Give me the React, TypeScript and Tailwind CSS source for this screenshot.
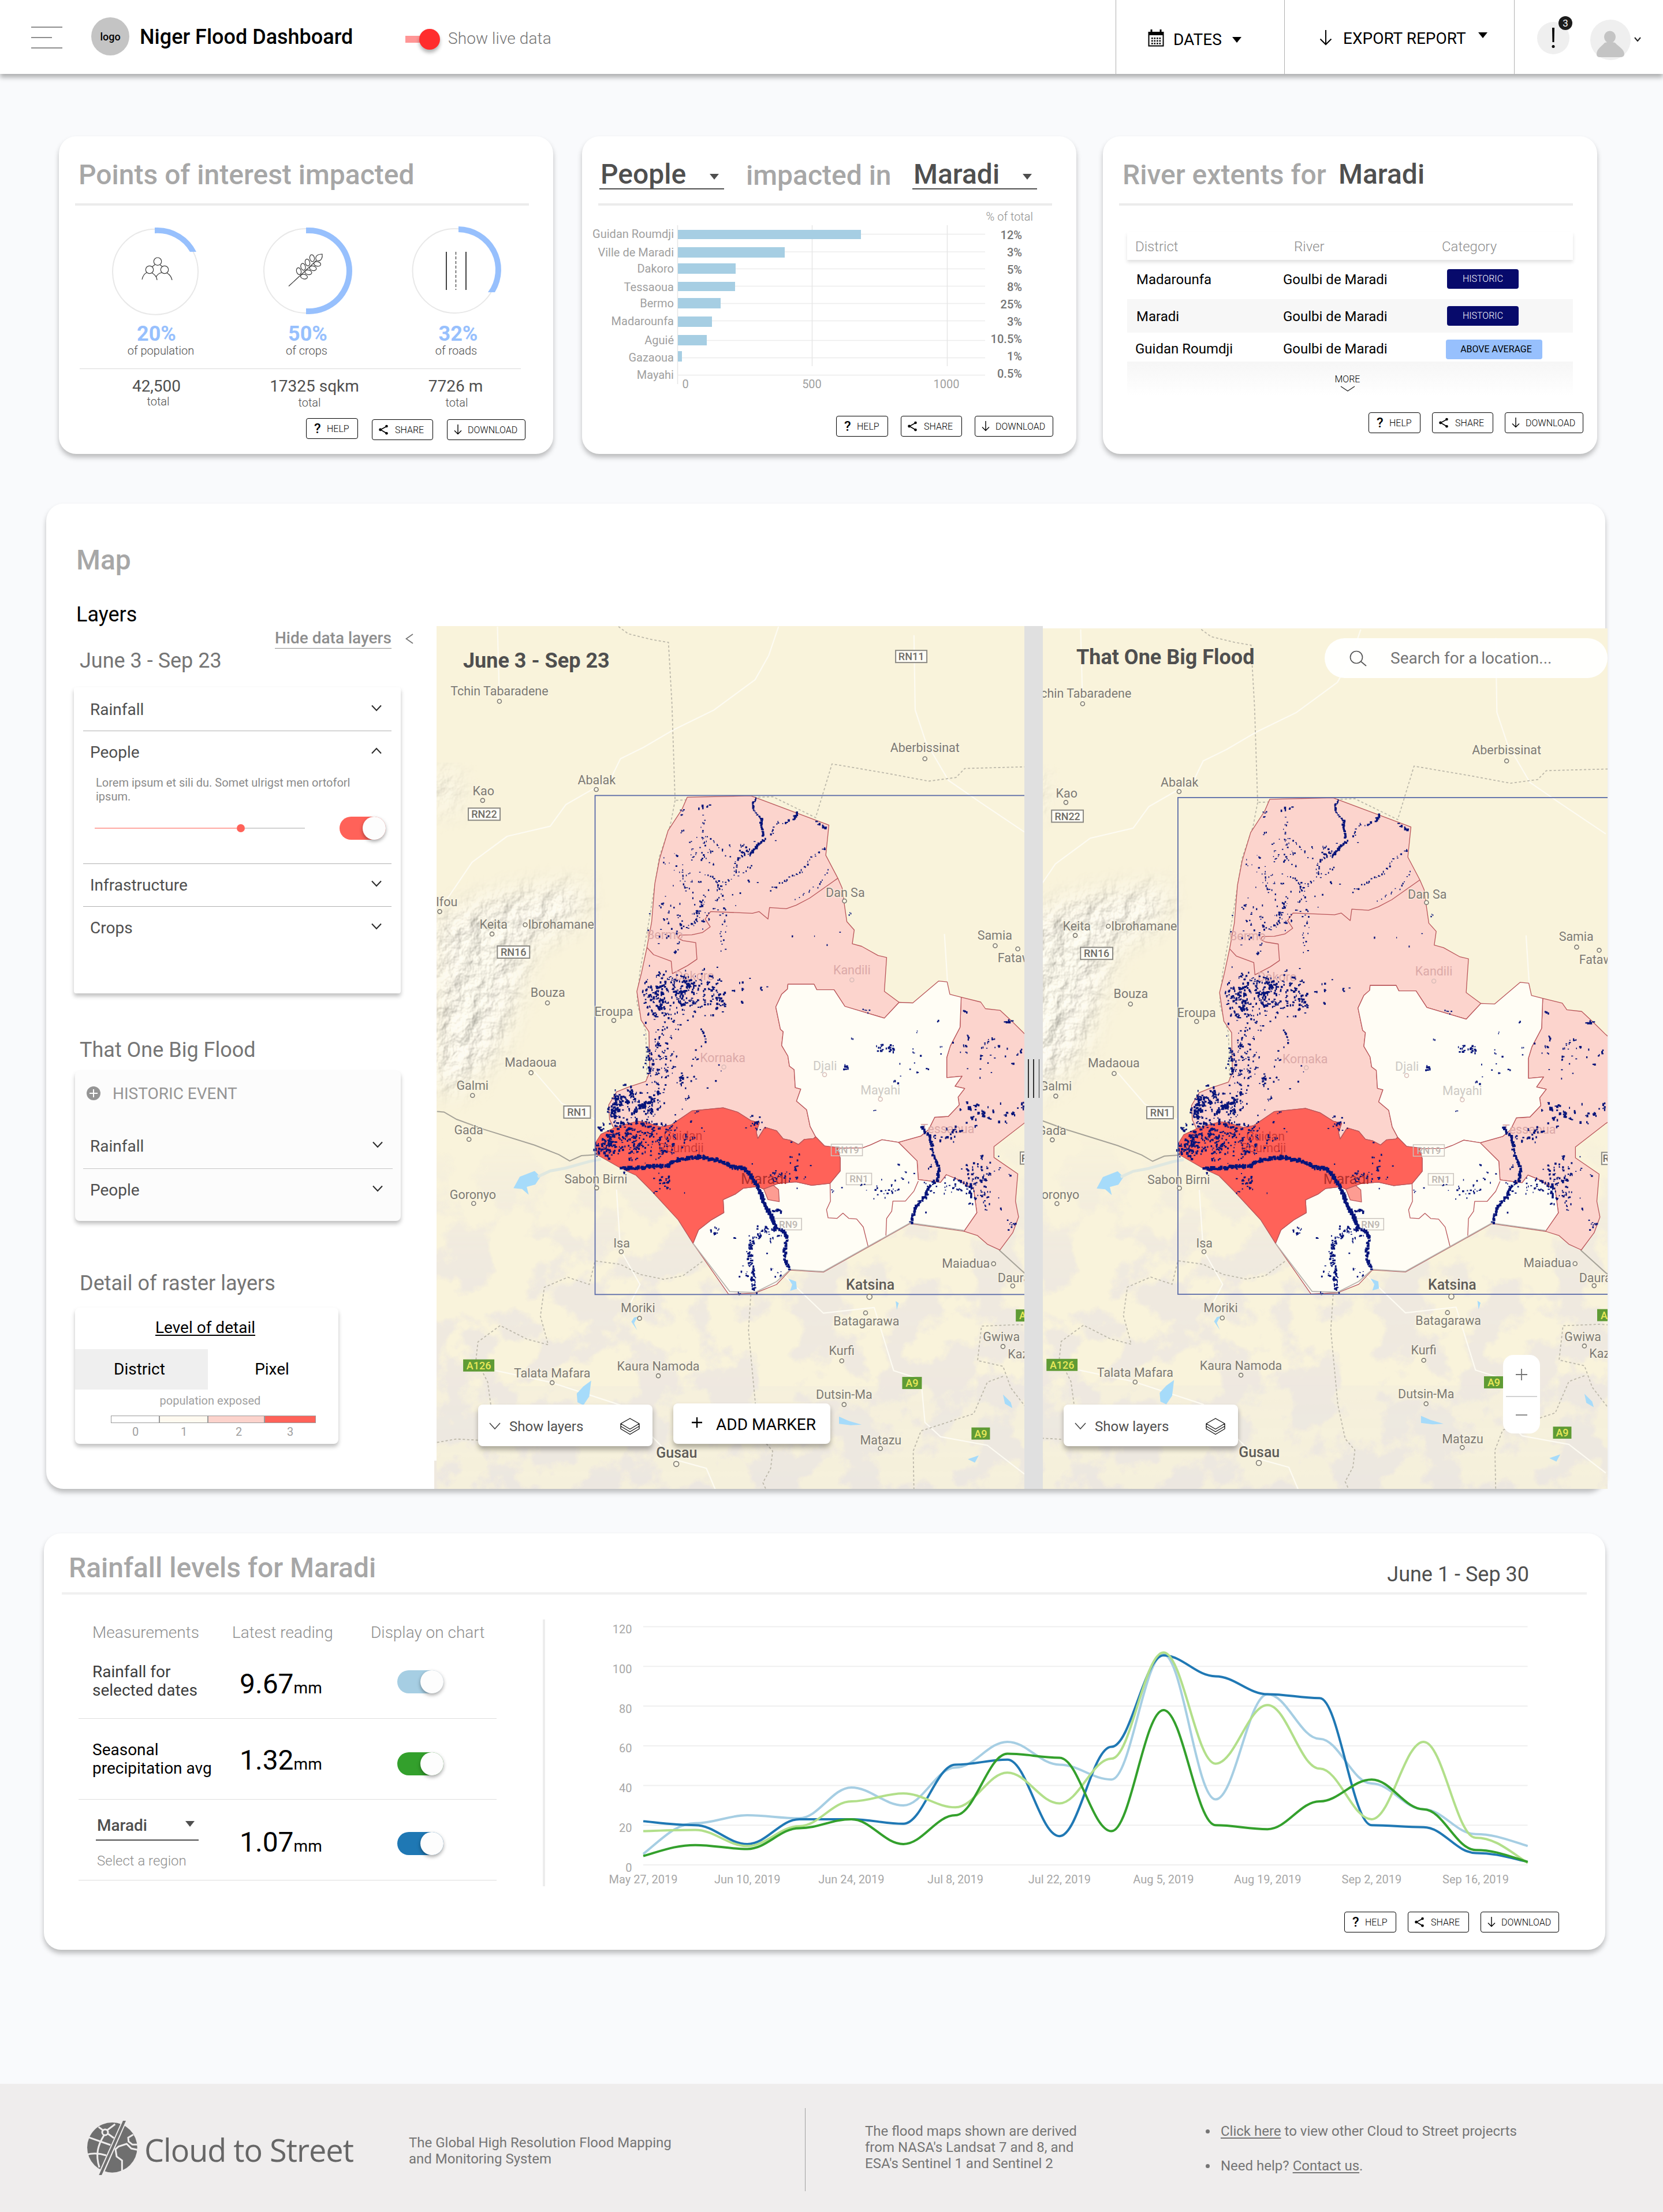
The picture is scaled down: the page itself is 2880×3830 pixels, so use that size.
import React from "react";

type Pt = [number, number];

/* ------------------------------------------------------------------ */
/* Small shared pieces                                                 */
/* ------------------------------------------------------------------ */

function Caret({ className = "" }: { className?: string }) {
  return (
    <svg viewBox="0 0 16 10" className={`h-[10px] w-4 shrink-0 ${className}`}>
      <path d="M0 0h16L8 10z" fill="currentColor" />
    </svg>
  );
}

function Chevron({ up = false, className = "" }: { up?: boolean; className?: string }) {
  return (
    <svg viewBox="0 0 18 12" className={`h-3 w-[18px] shrink-0 ${className}`} fill="none" stroke="#2b2b2b" strokeWidth="2">
      <path d={up ? "M1 10.5 9 2l8 8.5" : "M1 1.5 9 10l8-8.5"} />
    </svg>
  );
}

function Toggle({ color, className = "" }: { color: string; className?: string }) {
  return (
    <div className={`flex h-10 w-20 shrink-0 justify-end rounded-full ${color} ${className}`}>
      <div className="size-10 rounded-full bg-[#fdfdfd] shadow-[0_3px_6px_rgba(0,0,0,0.35)]" />
    </div>
  );
}

function Actions({ className = "", helpClass = "" }: { className?: string; helpClass?: string }) {
  const base = "flex h-9 shrink-0 items-center rounded-[4px] border-[1.5px] border-black bg-white text-[16px] font-light leading-5 text-black";
  return (
    <div className={`flex ${className}`}>
      <div className={`${base} w-[90px] ${helpClass}`}>
        <span className="ml-[13px] w-[22px] text-[24px] font-medium leading-6">?</span>
        <span className="pt-px">HELP</span>
      </div>
      <div className={`${base} w-[106px]`}>
        <svg viewBox="0 0 16 18" className="ml-[11px] mr-[12px] h-[18px] w-4">
          <path d="M14 3 3 9l11 6.500" fill="none" stroke="#000" strokeWidth="1.6" />
          <circle cx="13.500" cy="3" r="2.300" />
          <circle cx="2.600" cy="9" r="2.400" />
          <circle cx="13.500" cy="15.200" r="2.300" />
        </svg>
        <span className="pt-px">SHARE</span>
      </div>
      <div className={`${base} w-[136px]`}>
        <svg viewBox="0 0 14 18" className="ml-[11px] mr-[10px] h-[18px] w-[14px]" fill="none" stroke="#000" strokeWidth="1.4">
          <path d="M7 0v16.500M1 10.500l6 6 6-6" />
        </svg>
        <span className="pt-px">DOWNLOAD</span>
      </div>
    </div>
  );
}

/* ------------------------------------------------------------------ */
/* Header                                                              */
/* ------------------------------------------------------------------ */

function Header() {
  return (
    <header className="relative z-10 flex h-32 items-start bg-white shadow-[0_6px_8px_rgba(0,0,0,0.3)]">
      <div className="ml-[54px] mt-[46px] flex h-[38px] w-[54px] flex-col justify-between">
        <div className="h-[2px] w-full bg-[#8e8e8e]" />
        <div className="h-[2px] w-9 bg-[#8e8e8e]" />
        <div className="h-[2px] w-full bg-[#8e8e8e]" />
      </div>
      <div className="ml-[50px] mt-[30px] flex size-[66px] items-center justify-center rounded-full bg-[#c4c4c4] text-[18px] font-medium">logo</div>
      <div className="ml-[18px] mt-[43px] w-[460px] whitespace-nowrap text-[36px] font-medium leading-[42px] text-black">Niger Flood Dashboard</div>
      <div className="mt-[50px] flex h-9 w-[60px] items-center">
        <div className="h-3 w-9 shrink-0 bg-[#ff9696]" />
        <div className="-ml-3 size-9 shrink-0 rounded-full bg-[#ff2d2d] shadow-[0_5px_6px_rgba(0,0,0,0.3)]" />
      </div>
      <div className="ml-[14px] mt-[51px] w-[1156px] text-[28px] font-light leading-8 tracking-[0.1px] text-[#757575]">Show live data</div>
      <div className="flex h-32 w-[292px] border-l border-[#b0b0b0]">
        <svg viewBox="0 0 28 30" className="ml-[55px] mt-[51px] h-[30px] w-7">
          <path d="M6 0v7M22 0v7" stroke="#000" strokeWidth="3" />
          <path d="M1.500 5h25v23.500h-25z" fill="none" stroke="#000" strokeWidth="2" />
          <path d="M1 4h26v6H1z" />
          {[14, 18.500, 23].map((y) => [6, 10.500, 15, 19.500].map((x) => <rect key={`${x}-${y}`} x={x} y={y} width="2.600" height="2.600" />))}
        </svg>
        <div className="ml-[16px] mt-[53px] w-[102px] text-[28px] leading-8">DATES</div>
        <Caret className="mt-[64px]" />
      </div>
      <div className="flex h-32 w-[398px] border-l border-[#b0b0b0]">
        <svg viewBox="0 0 22 27" className="ml-[60px] mt-[52px] h-[27px] w-[22px]" fill="none" stroke="#000" strokeWidth="2">
          <path d="M11 0v25M1.500 15.500 11 25l9.500-9.500" />
        </svg>
        <div className="ml-[19px] mt-[51px] w-[234px] whitespace-nowrap text-[28px] leading-8">EXPORT REPORT</div>
        <Caret className="mt-[56px]" />
      </div>
      <div className="flex h-32 border-l border-[#b0b0b0]">
        <div className="relative ml-[39px] mt-[38px] flex size-14 items-center justify-center rounded-full bg-[#efefef]">
          <svg viewBox="0 0 8 36" className="h-9 w-2">
            <path d="M2 0h4l-.5 25h-3z" />
            <circle cx="4" cy="32.500" r="2.500" />
          </svg>
          <div className="absolute -right-[5px] -top-[10px] flex size-6 items-center justify-center rounded-full bg-[#1c1c1c] text-[17px] leading-6 text-white">3</div>
        </div>
        <svg viewBox="0 0 70 70" className="ml-9 mt-[34px] size-[70px]">
          <circle cx="35" cy="35" r="35" fill="#efefef" />
          <ellipse cx="34" cy="30" rx="10" ry="10.500" fill="#c4c4c4" />
          <path d="M11 60c0-9 8-13 14-20l9-2 9 2c6 7 16 11 16 20 0 3-3 5-7 5H17c-4 0-6-2-6-5z" fill="#c4c4c4" />
        </svg>
        <svg viewBox="0 0 12 8" className="ml-[6px] mt-[64px] h-2 w-3" fill="none" stroke="#222" strokeWidth="2">
          <path d="m1 1 5 6 5-6" />
        </svg>
      </div>
    </header>
  );
}

/* ------------------------------------------------------------------ */
/* Card 1: points of interest                                          */
/* ------------------------------------------------------------------ */

function PointsCard() {
  return (
    <section className="h-[550px] w-[856px] rounded-[30px] bg-white pt-[39px] shadow-[0_6px_8px_rgba(0,0,0,0.25)]">
      <h2 className="ml-[34px] text-[48px] font-medium leading-[56px] text-[#a7a7a7]">Points of interest impacted</h2>
      <div className="ml-7 mt-[21px] h-1 w-[786px] bg-[#ececec]" />
      <div className="ml-[38px] mt-[29px] grid grid-cols-[262px_258px_260px] text-center text-[#4f4f4f]">
        <div>
          <svg viewBox="140 385 262 170" className="h-[170px] w-[262px]" fill="none">
            <circle cx="269" cy="470.700" r="74" stroke="#e8e8e8" strokeWidth="2" />
            <path d="M268 394a75 75 0 0 1 5 0A75 75 0 0 1 340 436H329A65 65 0 0 0 268 404Z" fill="#97c0fd" />
            <g stroke="#3a3a3a" strokeWidth="1.200">
              <circle cx="273" cy="452.700" r="6.700" />
              <circle cx="259" cy="467" r="6.700" />
              <circle cx="285" cy="467" r="6.700" />
              <path d="M246 484c1-5 4-10 8-12M263 472.500c4 2 9 7 9 12.500M270 480c2-4 5-7 10-8M289 472.500c5 3 8 7 9 12.500M263.500 462l5-4M281 461.500l-4-3" />
            </g>
          </svg>
          <div className="mt-[4px] text-[36px] font-bold leading-[38px] text-[#97c0fd]">20%</div>
          <div className="-mt-px pl-[15px] text-[20px] font-light leading-[22px]">of population</div>
        </div>
        <div>
          <svg viewBox="402 385 258 170" className="h-[170px] w-[258px]" fill="none">
            <circle cx="530" cy="469" r="73" stroke="#e8e8e8" strokeWidth="2" />
            <path d="M530 394h5a75 75 0 0 1 0 150h-5v-10h5a65 65 0 0 0 0-130h-5z" fill="#97c0fd" />
            <g stroke="#3a3a3a" strokeWidth="1.200">
              <path d="M500 495.500 548 451" />
              <path d="M547 449c-1-5 2-9 11-9 1 6-2 12-7 11.500-2 0-3-1-4-2.500z" />
              <ellipse cx="540.500" cy="447" rx="4" ry="6" transform="rotate(-12 540.500 447)" />
              <ellipse cx="532.500" cy="454.500" rx="4" ry="6" transform="rotate(-14 532.500 454.500)" />
              <ellipse cx="525" cy="462" rx="4" ry="6" transform="rotate(-14 525 462)" />
              <ellipse cx="517.500" cy="469.500" rx="4" ry="6" transform="rotate(-14 517.500 469.500)" />
              <ellipse cx="549.500" cy="457" rx="6" ry="4" transform="rotate(10 549.500 457)" />
              <ellipse cx="542" cy="464.500" rx="6" ry="4" transform="rotate(12 542 464.500)" />
              <ellipse cx="534" cy="471.500" rx="6" ry="4" transform="rotate(12 534 471.500)" />
              <ellipse cx="526.500" cy="479" rx="6" ry="4" transform="rotate(12 526.500 479)" />
            </g>
          </svg>
          <div className="mt-[4px] pl-1 text-[36px] font-bold leading-[38px] text-[#97c0fd]">50%</div>
          <div className="-mt-px text-[20px] font-light leading-[22px]">of crops</div>
        </div>
        <div>
          <svg viewBox="660 385 260 170" className="h-[170px] w-[260px]" fill="none">
            <circle cx="787.500" cy="469" r="73" stroke="#e8e8e8" strokeWidth="2" />
            <path d="M794 392A75 75 0 0 1 857 506H845A65 65 0 0 0 794 402Z" fill="#97c0fd" />
            <path d="M773 436v66M807 436v66" stroke="#222" strokeWidth="1.700" />
            <path d="M789.500 436v66" stroke="#333" strokeWidth="1.200" strokeDasharray="5 3" />
          </svg>
          <div className="mt-[4px] pl-[7px] text-[36px] font-bold leading-[38px] text-[#97c0fd]">32%</div>
          <div className="-mt-px text-[20px] font-light leading-[22px]">of roads</div>
        </div>
      </div>
      <div className="ml-9 mt-5 h-px w-[764px] bg-[#d8d8d8]" />
      <div className="ml-[38px] mt-[14px] grid grid-cols-[262px_258px_260px] text-center text-[#4f4f4f]">
        <div>
          <div className="text-[28px] leading-8">42,500</div>
          <div className="-mt-px pl-[6px] text-[20px] font-light leading-[22px]">total</div>
        </div>
        <div>
          <div className="pl-[27px] text-[28px] leading-8">17325 sqkm</div>
          <div className="pl-[10px] pt-px text-[20px] font-light leading-[22px]">total</div>
        </div>
        <div>
          <div className="pr-[2px] text-[28px] leading-8">7726 m</div>
          <div className="pl-[2px] pt-px text-[20px] font-light leading-[22px]">total</div>
        </div>
      </div>
      <Actions className="ml-[428px] mt-[18px] gap-6" helpClass="-mt-[2px]" />
    </section>
  );
}

/* ------------------------------------------------------------------ */
/* Card 2: people impacted                                             */
/* ------------------------------------------------------------------ */

const bars = [
  { name: "Guidan Roumdji", pct: "12%", base: 412, y: 398, h: 16, end: 1491, grid: 405.5, pb: 414 },
  { name: "Ville de Maradi", pct: "3%", base: 444, y: 428, h: 18, end: 1359, grid: 436, pb: 444 },
  { name: "Dakoro", pct: "5%", base: 472, y: 456, h: 18, end: 1274, grid: 465.5, pb: 473.5 },
  { name: "Tessaoua", pct: "8%", base: 503.5, y: 488, h: 16, end: 1273, grid: 495.5, pb: 504 },
  { name: "Bermo", pct: "25%", base: 532, y: 516, h: 18, end: 1248, grid: 525.5, pb: 534 },
  { name: "Madarounfa", pct: "3%", base: 563, y: 548, h: 18, end: 1233, grid: 555.5, pb: 564 },
  { name: "Aguié", pct: "10.5%", base: 596, y: 580, h: 18, end: 1224, grid: 589.5, pb: 594 },
  { name: "Gazaoua", pct: "1%", base: 625.5, y: 608, h: 18, end: 1181, grid: 619.5, pb: 624 },
  { name: "Mayahi", pct: "0.5%", base: 656, y: 640, h: 0, end: 1174, grid: 649.5, pb: 654 },
];

function TitleSelect({ label }: { label: string }) {
  return (
    <div className="flex h-[55px] w-[216px] items-start justify-between border-b-2 border-[#4f4f4f] pr-[9px] text-[#4f4f4f]">
      <span className="pl-[2px] pt-px text-[48px] font-medium leading-[56px]">{label}</span>
      <Caret className="mt-7" />
    </div>
  );
}

function PeopleCard() {
  return (
    <section className="ml-[50px] h-[550px] w-[856px] rounded-[30px] bg-white pt-[37px] shadow-[0_6px_8px_rgba(0,0,0,0.25)]">
      <div className="ml-[30px] flex h-[58px]">
        <TitleSelect label="People" />
        <h2 className="ml-[38px] mt-[3px] w-[288px] text-[48px] font-medium leading-[56px] text-[#a7a7a7]">impacted in</h2>
        <TitleSelect label="Maradi" />
      </div>
      <div className="ml-7 mt-[21px] h-1 w-[786px] bg-[#ececec]" />
      <svg viewBox="1018 360 800 325" className="ml-[10px] mt-1 h-[325px] w-[800px]" fontSize="20">
        {bars.map((b) => (
          <path key={b.name} d={`M1174 ${b.grid}H1706`} stroke="#ececec" strokeWidth="1.500" />
        ))}
        <path d="M1173.500 390V665M1406.500 390V634M1640.500 390V634" stroke="#e6e6e6" strokeWidth="1.500" />
        <text x="1789" y="382" textAnchor="end" fill="#8e8e8e" fontWeight="300">% of total</text>
        {bars.map((b) => (
          <g key={b.name}>
            <rect x="1174" y={b.y} width={b.end - 1174} height={b.h} fill="#a6cee3" />
            <text x="1167" y={b.base} textAnchor="end" fill="#a0a0a0">{b.name}</text>
            <text x="1770" y={b.pb} textAnchor="end" fill="#757575" fontWeight="500">{b.pct}</text>
          </g>
        ))}
        <g fill="#a0a0a0" textAnchor="middle">
          <text x="1187" y="672">0</text>
          <text x="1406" y="672">500</text>
          <text x="1639" y="672">1000</text>
        </g>
      </svg>
      <Actions className="ml-[440px] mt-[35px] gap-[22px]" />
    </section>
  );
}

/* ------------------------------------------------------------------ */
/* Card 3: river extents                                               */
/* ------------------------------------------------------------------ */

function RiverCard() {
  return (
    <section className="ml-[46px] h-[550px] w-[856px] rounded-[30px] bg-white pt-[38px] shadow-[0_6px_8px_rgba(0,0,0,0.25)]">
      <h2 className="ml-[34px] flex h-[58px] text-[48px] font-medium leading-[56px] text-[#a7a7a7]">
        <span className="mt-px w-[374px]">River extents for</span>
        <span className="text-[#4f4f4f]">Maradi</span>
      </h2>
      <div className="ml-7 mt-[20px] h-1 w-[786px] bg-[#ececec]" />
      <div className="ml-[42px] mt-[46px] w-[772px] text-[24px] leading-7 text-black">
        <div className="grid h-12 grid-cols-[276px_254px_1fr] pt-[11px] font-light text-[#8e8e8e] shadow-[0_4px_6px_rgba(0,0,0,0.12)]">
          <span className="pl-[14px]">District</span>
          <span className="pl-[13px]">River</span>
          <span className="pl-[15px]">Category</span>
        </div>
        <div className="grid h-[68px] grid-cols-[270px_284px_1fr] pt-[16px]">
          <span className="mt-1 pl-4">Madarounfa</span>
          <span className="mt-1">Goulbi de Maradi</span>
          <span className="h-[34px] w-[124px] rounded-[4px] bg-[#070a6b] text-center text-[16px] font-light leading-[34px] text-white">HISTORIC</span>
        </div>
        <div className="grid h-[58px] grid-cols-[270px_284px_1fr] bg-[#f7f7f7] pt-3">
          <span className="mt-1 pl-4">Maradi</span>
          <span className="mt-1">Goulbi de Maradi</span>
          <span className="h-[34px] w-[124px] rounded-[4px] bg-[#070a6b] text-center text-[16px] font-light leading-[34px] text-white">HISTORIC</span>
        </div>
        <div className="grid h-[50px] grid-cols-[270px_282px_1fr] pt-3">
          <span className="mt-[2px] pl-[14px]">Guidan Roumdji</span>
          <span className="mt-[2px]">Goulbi de Maradi</span>
          <span className="h-[34px] w-[167px] rounded-[4px] bg-[#97c0fd] pl-[7px] text-center text-[16px] leading-[34px] text-black">ABOVE AVERAGE</span>
        </div>
        <div className="flex h-[60px] flex-col items-center bg-gradient-to-b from-[#f6f6f6] to-white pr-[9px] pt-[21px] text-[16px] font-light leading-5">
          MORE
          <svg viewBox="0 0 26 10" className="mt-px h-[10px] w-[26px]" fill="none" stroke="#222" strokeWidth="1.300">
            <path d="m1 1 12 8L25 1" />
          </svg>
        </div>
      </div>
      <Actions className="ml-[460px] mt-[28px] gap-5" />
    </section>
  );
}

/* ------------------------------------------------------------------ */
/* Map drawing                                                         */
/* ------------------------------------------------------------------ */

const SX = 0.676;
const SY = 0.4974;
const px = (x: number) => 750 + x * SX;
const py = (y: number) => 1070 + y * SY;
const line = (p: Pt[]) => p.map(([x, y], i) => `${i ? "L" : "M"}${px(x).toFixed(1)} ${py(y).toFixed(1)}`).join("");

function makeRandom(seed: number) {
  let s = seed;
  return () => {
    s = (s * 1664525 + 1013904223) % 4294967296;
    return s / 4294967296;
  };
}

const northEdge: Pt[] = [[548, 1147], [560, 1057], [568, 925], [580, 840], [602, 740], [638, 665], [651, 624], [814, 619], [1014, 721], [1006, 826], [1037, 906], [1048, 940], [1054, 1000], [1060, 1057], [1079, 1086], [1074, 1134], [1098, 1143], [1140, 1175], [1162, 1182], [1156, 1300], [1194, 1338]];
const whiteWest: Pt[] = [[1194, 1338], [1156, 1393], [1055, 1352], [1027, 1294], [983, 1294], [976, 1275], [909, 1275], [908, 1292], [893, 1310], [878, 1354], [890, 1432], [897, 1440], [893, 1488], [909, 1525], [913, 1560], [925, 1572], [928, 1635], [942, 1640], [931, 1682], [957, 1712], [966, 1770], [980, 1806]];
const redTop: Pt[] = [[980, 1806], [975, 1812], [951, 1815], [936, 1833], [915, 1818], [897, 1813], [880, 1785], [850, 1773], [832, 1812], [828, 1790], [836, 1757], [815, 1750], [780, 1720], [743, 1705], [663, 1716], [610, 1765], [583, 1772], [548, 1757], [525, 1752], [487, 1765], [463, 1776]];
const westEdge: Pt[] = [[463, 1776], [452, 1745], [450, 1695], [470, 1650], [500, 1633], [545, 1613], [555, 1580], [553, 1440], [533, 1400], [522, 1300], [534, 1235], [548, 1147]];
const redEast: Pt[] = [[980, 1806], [1003, 1838], [1035, 1843], [1043, 1880], [1043, 1925], [1017, 1968]];
const redSouth: Pt[] = [[1017, 1968], [970, 1975], [930, 1963], [885, 1968], [847, 1988], [832, 1979], [795, 1985], [775, 2005], [743, 2025], [745, 2070], [713, 2095], [680, 2130], [666, 2177]];
const redWest: Pt[] = [[666, 2177], [628, 2095], [560, 1995], [520, 1940], [483, 1917], [420, 1868], [415, 1830], [430, 1797], [463, 1776]];
const whiteEast: Pt[] = [[1194, 1338], [1229, 1340], [1295, 1264], [1317, 1267], [1324, 1310], [1353, 1320], [1350, 1425], [1325, 1490], [1316, 1530], [1316, 1600], [1355, 1595], [1337, 1630], [1362, 1638], [1345, 1668], [1348, 1695], [1320, 1735], [1285, 1738], [1270, 1780], [1250, 1803], [1192, 1825]];
const whiteSouth: Pt[] = [[1192, 1825], [1150, 1816], [1120, 1835], [1100, 1845], [1036, 1846]];
const eastOuter: Pt[] = [[1353, 1320], [1403, 1337], [1415, 1360], [1453, 1366], [1480, 1400], [1515, 1447], [1580, 1520], [1580, 1700], [1515, 1758], [1437, 1840], [1437, 1878], [1498, 1935], [1492, 2030], [1500, 2085], [1485, 2140], [1452, 2200], [1420, 2180], [1395, 2150], [1360, 2135]];
const eastInner: Pt[] = [[1360, 2135], [1393, 2070], [1385, 1990], [1345, 1955], [1315, 1938], [1300, 1965], [1243, 1955], [1240, 1890], [1192, 1825]];
const southEdge: Pt[] = [[1360, 2135], [1222, 2108], [1115, 2190], [1000, 2277], [915, 2270], [880, 2320], [825, 2350], [757, 2354], [666, 2177]];
const bermo: Pt[] = [[1037, 906], [965, 975], [930, 1000], [905, 1012], [862, 1008], [858, 1048], [835, 1022], [818, 1028], [711, 1022], [697, 1048], [710, 1075], [690, 1095], [663, 1103], [632, 1104], [628, 1115], [640, 1123], [673, 1130], [676, 1188], [652, 1210], [613, 1238], [610, 1195], [565, 1172], [548, 1147]];
const innerA: Pt[] = [[1017, 1968], [1018, 2030], [1008, 2060], [1012, 2088], [1035, 2090], [1050, 2072], [1065, 2090], [1085, 2092], [1102, 2120], [1115, 2190]];
const innerB: Pt[] = [[1243, 1960], [1232, 1995], [1210, 2030], [1178, 2030], [1175, 2065], [1162, 2090], [1160, 2150]];
const city: Pt[] = [[847, 1988], [858, 2025], [887, 2032], [885, 1990], [872, 1975]];
const rev = (p: Pt[]) => [...p].reverse();

const pinkShape = line([...northEdge, ...whiteWest, ...redTop, ...westEdge]) + "Z";
const redShape = line([...redEast, ...redSouth, ...redWest, ...rev(redTop)]) + "Z";
const whiteShape = line([...whiteEast, ...whiteSouth, [1003, 1838], ...rev(whiteWest)]) + "Z";
const eastShape = line([...eastOuter, ...eastInner, ...rev(whiteEast).slice(0, 15)]) + "Z";
const southShape = line([...rev(whiteSouth), ...rev(eastInner), ...southEdge, ...rev(redSouth), ...rev(redEast).slice(0, 4)]) + "Z";

/* Water reaches: polyline, scatter, pixel size, sampling step */
const reaches: { p: Pt[]; spread: number; size: number; step: number }[] = [
  { p: [[483, 1917], [540, 1912], [600, 1906], [620, 1890], [650, 1880], [690, 1876], [740, 1892], [770, 1912], [795, 1915], [815, 1945], [835, 1985], [848, 2040], [870, 2090], [877, 2125]], spread: 4, size: 4.6, step: 2.2 },
  { p: [[877, 2125], [898, 2132], [908, 2165], [900, 2200], [904, 2240], [912, 2268]], spread: 4, size: 4, step: 3 },
  { p: [[877, 2125], [850, 2135], [825, 2165], [812, 2180], [812, 2235], [820, 2285], [824, 2348]], spread: 8, size: 3.2, step: 3 },
  { p: [[1250, 1772], [1275, 1810], [1278, 1850], [1287, 1890], [1297, 1920], [1292, 1955], [1270, 1980], [1262, 2015], [1235, 2050], [1225, 2106]], spread: 4, size: 3.8, step: 3 },
  { p: [[828, 628], [818, 645], [822, 670], [842, 700], [842, 730], [846, 762]], spread: 2, size: 3.2, step: 4 },
  { p: [[850, 772], [832, 790], [820, 812], [808, 826]], spread: 3, size: 4, step: 3 },
  { p: [[805, 820], [775, 845], [773, 895]], spread: 5, size: 2.8, step: 6 },
  { p: [[700, 890], [718, 910], [735, 920], [725, 950]], spread: 5, size: 2.8, step: 7 },
  { p: [[932, 680], [920, 700]], spread: 5, size: 4, step: 3 },
  { p: [[915, 705], [878, 720]], spread: 6, size: 3, step: 8 },
  { p: [[985, 712], [1010, 735]], spread: 4, size: 3.6, step: 5 },
  { p: [[1008, 798], [965, 835], [945, 880], [905, 915], [860, 950]], spread: 6, size: 2.6, step: 7 },
  { p: [[1015, 880], [985, 935], [920, 985]], spread: 5, size: 2.4, step: 10 },
  { p: [[708, 650], [680, 665]], spread: 5, size: 3.2, step: 5 },
  { p: [[640, 668], [630, 690]], spread: 6, size: 3.2, step: 5 },
  { p: [[820, 860], [780, 895], [735, 930], [750, 985]], spread: 6, size: 2.6, step: 9 },
  { p: [[640, 880], [645, 940], [665, 945]], spread: 3, size: 2.6, step: 8 },
  { p: [[695, 690], [690, 750], [720, 780], [750, 825], [770, 835]], spread: 7, size: 2.4, step: 10 },
  { p: [[655, 830], [690, 820], [730, 812]], spread: 8, size: 2.4, step: 8 },
  { p: [[510, 1725], [535, 1700], [565, 1675]], spread: 6, size: 4.4, step: 2.4 },
  { p: [[508, 1630], [518, 1690]], spread: 3, size: 3, step: 5 },
  { p: [[545, 1700], [560, 1740]], spread: 8, size: 3, step: 5 },
  { p: [[470, 1760], [520, 1752], [580, 1770], [610, 1780]], spread: 10, size: 3.4, step: 4 },
  { p: [[455, 1700], [462, 1740], [475, 1680], [500, 1675]], spread: 12, size: 3.6, step: 4 },
  { p: [[420, 1860], [450, 1880]], spread: 10, size: 4, step: 4 },
  { p: [[690, 1430], [703, 1480]], spread: 4, size: 3, step: 7 },
  { p: [[690, 980], [670, 1050], [655, 1090]], spread: 10, size: 2.6, step: 5 },
  { p: [[745, 1000], [745, 1160]], spread: 12, size: 2.4, step: 8 },
  { p: [[1145, 2003], [1200, 1985]], spread: 8, size: 3, step: 5 },
  { p: [[1340, 1950], [1370, 1970], [1385, 2020], [1390, 2040]], spread: 9, size: 3.6, step: 5 },
  { p: [[1395, 1900], [1360, 1930]], spread: 20, size: 3, step: 4 },
  { p: [[1405, 1500], [1440, 1455]], spread: 8, size: 3, step: 7 },
  { p: [[1465, 1410], [1484, 1398]], spread: 4, size: 4, step: 4 },
];

/* Scatter clusters: centre, radii, count, pixel size */
const clusters: [number, number, number, number, number, number][] = [
  [610, 1340, 80, 115, 120, 2.8], [570, 1330, 36, 70, 90, 3.2], [690, 1310, 75, 100, 110, 3], [655, 1285, 28, 40, 40, 3.6],
  [735, 1325, 14, 25, 20, 3.4], [630, 1260, 95, 35, 50, 2.6], [590, 1490, 44, 80, 60, 2.6], [554, 1550, 10, 50, 26, 3.4],
  [475, 1690, 26, 55, 70, 3.2], [530, 1700, 60, 60, 90, 2.8], [575, 1610, 40, 90, 60, 2.6], [650, 1600, 100, 110, 50, 2.6],
  [635, 1600, 7, 20, 10, 3.4], [448, 1830, 32, 50, 100, 3.2], [495, 1810, 70, 60, 130, 3], [560, 1840, 70, 80, 110, 2.8],
  [630, 1800, 90, 60, 40, 2.6], [590, 1955, 30, 42, 24, 2.8], [605, 1060, 45, 110, 50, 2.6], [680, 1010, 70, 80, 35, 2.4],
  [650, 860, 90, 120, 34, 2.2], [700, 800, 80, 60, 28, 2.4], [800, 1290, 60, 50, 14, 2.8], [795, 805, 30, 26, 18, 2.8],
  [760, 950, 90, 90, 22, 2.4], [1000, 1120, 90, 90, 8, 2.4], [1158, 1497, 28, 18, 26, 3], [1200, 1480, 150, 100, 22, 2.8],
  [1060, 1562, 8, 14, 7, 3.4], [1230, 1610, 110, 110, 12, 2.6], [1430, 1520, 85, 80, 46, 2.8], [1400, 1720, 70, 46, 50, 3.4],
  [1495, 1700, 40, 46, 26, 3.2], [1320, 1800, 32, 26, 24, 3.2], [1400, 1930, 60, 60, 50, 2.8], [1330, 1980, 80, 34, 44, 2.8],
  [1420, 2010, 45, 60, 34, 2.8], [1475, 2110, 15, 30, 9, 2.6], [820, 1770, 30, 30, 22, 3], [900, 1880, 130, 90, 22, 2.6],
  [900, 1945, 60, 24, 26, 2.6], [850, 2150, 60, 60, 26, 2.6], [720, 2130, 12, 30, 12, 2.6], [800, 2270, 34, 80, 22, 2.4],
  [885, 2285, 24, 34, 10, 2.4], [1180, 1990, 120, 80, 20, 2.6], [882, 2062, 14, 10, 14, 3.4], [1120, 1365, 20, 18, 5, 2.6],
  [620, 2000, 50, 60, 6, 2.4], [870, 745, 50, 50, 12, 2.6], [1030, 2000, 80, 90, 7, 2.4], [1200, 1920, 70, 50, 9, 2.4],
];

function buildWater() {
  const rnd = makeRandom(77);
  let d = "";
  const dot = (x: number, y: number, s: number) => {
    const w = s * (0.5 + rnd() * 0.8);
    const h = s * (0.5 + rnd() * 0.9);
    d += `M${(px(x) - w / 2).toFixed(1)} ${(py(y) - h / 2).toFixed(1)}h${w.toFixed(1)}v${h.toFixed(1)}h-${w.toFixed(1)}z`;
  };
  reaches.forEach(({ p, spread, size, step }) => {
    for (let i = 1; i < p.length; i++) {
      const [x0, y0] = p[i - 1];
      const [x1, y1] = p[i];
      const n = Math.max(2, Math.round(Math.hypot(x1 - x0, y1 - y0) / step));
      for (let k = 0; k < n; k++) {
        const t = k / n;
        dot(x0 + (x1 - x0) * t + (rnd() - 0.5) * spread * 1.6, y0 + (y1 - y0) * t + (rnd() - 0.5) * spread * 2, size);
      }
    }
  });
  clusters.forEach(([cx, cy, rx, ry, n, s]) => {
    let x = cx;
    let y = cy;
    for (let i = 0; i < n; i++) {
      if (i === 0 || rnd() < 0.6) {
        x = cx + (rnd() + rnd() + rnd() - 1.5) * 0.95 * rx;
        y = cy + (rnd() + rnd() + rnd() - 1.5) * 0.95 * ry;
      } else {
        x += (rnd() - 0.5) * 9;
        y += (rnd() - 0.45) * 12;
      }
      dot(x, y, s);
    }
  });
  return d;
}
const water = buildWater();

type Town = { n: string; x: number; y: number; c?: Pt; s?: number };
const towns: Town[] = [
  { n: "Tchin Tabaradene", x: 170, y: 269, c: [170, 290] },
  { n: "Aberbissinat", x: 1260, y: 467, c: [1260, 490] },
  { n: "Abalak", x: 419, y: 580, c: [418, 597] },
  { n: "Kao", x: 129, y: 618, c: [127, 635] },
  { n: "Ifou", x: 35, y: 1004, c: [17, 1022] },
  { n: "Keita", x: 155, y: 1082, c: [151, 1100] },
  { n: "Ibrohamane", x: 328, y: 1082, c: [236, 1068] },
  { n: "Samia", x: 1439, y: 1120, c: [1440, 1141] },
  { n: "Fatawa", x: 1498, y: 1199, c: [1498, 1152] },
  { n: "Bouza", x: 294, y: 1319, c: [293, 1340] },
  { n: "Eroupa", x: 463, y: 1385, c: [463, 1401] },
  { n: "Madaoua", x: 250, y: 1562, c: [251, 1583] },
  { n: "Galmi", x: 101, y: 1642, c: [101, 1662] },
  { n: "Gada", x: 91, y: 1798, c: [92, 1815] },
  { n: "Sabon Birni", x: 417, y: 1969, c: [419, 1984] },
  { n: "Goronyo", x: 102, y: 2022, c: [104, 2038] },
  { n: "Isa", x: 483, y: 2191, c: [482, 2206] },
  { n: "Moriki", x: 525, y: 2417, c: [529, 2438] },
  { n: "Katsina", x: 1120, y: 2339, c: [1118, 2363], s: 25 },
  { n: "Batagarawa", x: 1110, y: 2463, c: [1108, 2419] },
  { n: "Maiadua", x: 1365, y: 2261, c: [1436, 2248] },
  { n: "Daura", x: 1488, y: 2312, c: [1485, 2325] },
  { n: "Gwiwa", x: 1456, y: 2518, c: [1460, 2536] },
  { n: "Kazaure", x: 1530, y: 2578 },
  { n: "Kurfi", x: 1047, y: 2566, c: [1047, 2586] },
  { n: "Kaura Namoda", x: 577, y: 2620, c: [577, 2638] },
  { n: "Talata Mafara", x: 305, y: 2643, c: [305, 2662] },
  { n: "Dutsin-Ma", x: 1053, y: 2719, c: [1053, 2738] },
  { n: "Matazu", x: 1147, y: 2877, c: [1146, 2891] },
  { n: "Gusau", x: 624, y: 2924, c: [623, 2945], s: 25 },
  { n: "Dan Sa", x: 1056, y: 971, c: [1054, 985] },
];
const faintTowns: Town[] = [
  { n: "Bermo", x: 594, y: 1117 },
  { n: "Dakoro", x: 670, y: 1261 },
  { n: "Kandili", x: 1073, y: 1240, c: [1073, 1260] },
  { n: "Kornaka", x: 742, y: 1547, c: [745, 1563] },
  { n: "Djali", x: 1004, y: 1574, c: [1003, 1590] },
  { n: "Mayahi", x: 1146, y: 1658, c: [1146, 1675] },
  { n: "Tessaoua", x: 1318, y: 1793 },
];
type Road = { n: string; x: number; y: number; w: number; faint?: boolean; green?: boolean };
const roads: Road[] = [
  { n: "RN11", x: 1225, y: 134, w: 54 },
  { n: "RN22", x: 131, y: 683, w: 55 },
  { n: "RN16", x: 206, y: 1163, w: 56 },
  { n: "RN1", x: 369, y: 1720, w: 46 },
  { n: "RN19", x: 1060, y: 1852, w: 54, faint: true },
  { n: "RN1", x: 1091, y: 1953, w: 44, faint: true },
  { n: "RN9", x: 910, y: 2110, w: 46, faint: true },
  { n: "RN18", x: 1540, y: 1880, w: 48 },
  { n: "A126", x: 117, y: 2602, w: 54, green: true },
  { n: "A9", x: 1227, y: 2663, w: 34, green: true },
  { n: "A9", x: 1403, y: 2839, w: 32, green: true },
  { n: "A9", x: 1518, y: 2428, w: 34, green: true },
];
const borders: Pt[][] = [
  [[475, 30], [500, 55], [560, 75], [603, 85], [612, 300], [620, 635], [870, 622], [980, 695], [1022, 508], [1160, 540], [1270, 568], [1340, 555], [1362, 524], [1600, 515]],
  [[620, 635], [608, 720], [580, 830], [555, 1040], [530, 1230], [522, 1340], [545, 1440], [548, 1600]],
  [[690, 2240], [640, 2290], [590, 2302], [530, 2285], [480, 2250], [415, 2238], [400, 2320], [345, 2295], [285, 2330], [275, 2430], [295, 2530], [240, 2510], [172, 2463], [115, 2520], [110, 2580], [140, 2660], [148, 2740]],
  [[814, 2355], [808, 2480], [826, 2740], [845, 2860], [870, 2900], [865, 2960], [845, 3010], [855, 3040]],
  [[1600, 2470], [1500, 2460], [1405, 2465], [1395, 2585], [1460, 2605], [1480, 2680], [1520, 2750]],
  [[1460, 2640], [1420, 2660], [1385, 2770], [1250, 2830], [1230, 2900], [1232, 3040]],
  [[10, 2870], [60, 2858], [115, 2862]],
];
const paleRoads: Pt[][] = [
  [[885, 30], [860, 130], [825, 215], [720, 320], [615, 390], [540, 450], [480, 490], [455, 560], [340, 650], [300, 725], [190, 760], [100, 850], [60, 930], [20, 1010]],
  [[1232, 60], [1235, 320], [1262, 430], [1320, 565], [1400, 640], [1515, 745]],
  [[165, 30], [170, 290]],
  [[1310, 1100], [1318, 1270]],
  [[260, 1580], [330, 1690], [415, 1745]],
  [[900, 2290], [1000, 2420], [1130, 2400], [1180, 2620], [1250, 2650], [1260, 2800], [1300, 2850], [1420, 2880], [1515, 2980]],
  [[470, 1990], [480, 2200], [530, 2320], [500, 2400]],
  [[160, 2620], [300, 2660], [480, 2740], [620, 2930], [700, 2960], [725, 3040]],
];

function FloodMap({ viewBox, transform, id, shields }: { viewBox: string; transform?: string; id: string; shields: Road[] }) {
  const ground = `${id}-ground`;
  const hills = `${id}-hills`;
  const soft = `${id}-soft`;
  const fade = `${id}-fade`;
  const hillMask = `${id}-hillmask`;
  return (
    <svg viewBox={viewBox} className="absolute inset-0 h-full w-full" preserveAspectRatio="none">
      <defs>
        <filter id={ground} x="0" y="0" width="100%" height="100%" colorInterpolationFilters="sRGB">
          <feTurbulence type="fractalNoise" baseFrequency="0.013 0.014" numOctaves="5" seed="9" />
          <feColorMatrix values="0 0 0 0 0.929  0 0 0 0 0.906  0 0 0 0 0.878  9 0 0 0 -4.100" />
        </filter>
        <filter id={hills} x="0" y="0" width="100%" height="100%" colorInterpolationFilters="sRGB">
          <feTurbulence type="fractalNoise" baseFrequency="0.034 0.030" numOctaves="4" seed="4" />
          <feDiffuseLighting surfaceScale="5" lightingColor="#f8f5ee" diffuseConstant="1.090">
            <feDistantLight azimuth="225" elevation="64" />
          </feDiffuseLighting>
        </filter>
        <filter id={soft} x="-20%" y="-20%" width="140%" height="140%">
          <feGaussianBlur stdDeviation="22" />
        </filter>
        <linearGradient id={fade} x1="0" y1="0" x2="0" y2="1">
          <stop offset="0" stopColor="#fff" stopOpacity="0" />
          <stop offset="0.350" stopColor="#fff" stopOpacity="0.800" />
          <stop offset="1" stopColor="#fff" />
        </linearGradient>
        <mask id={`${ground}-m`} maskUnits="userSpaceOnUse" x="740" y="1900" width="1080" height="700">
          <rect x="740" y="1960" width="1080" height="640" fill={`url(#${fade})`} />
        </mask>
        <mask id={hillMask} maskUnits="userSpaceOnUse" x="740" y="1300" width="400" height="800">
          <g fill="#fff" filter={`url(#${soft})`}>
            <ellipse cx="770" cy="1370" rx="30" ry="40" opacity="0.400" />
            <path d="M750 1590 860 1550 1010 1530 1010 1590 920 1640 900 1720 860 1830 790 1890 750 1880z" opacity="0.700" />
          </g>
        </mask>
      </defs>
      <g transform={transform}>
        <rect x="740" y="1060" width="1080" height="1540" fill="#f9f3db" />
        <g mask={`url(#${hillMask})`}>
          <rect x="740" y="1320" width="320" height="620" fill="#eee" filter={`url(#${hills})`} />
        </g>
        <g mask={`url(#${ground}-m)`}>
          <rect x="740" y="1960" width="1080" height="640" filter={`url(#${ground})`} />
          <rect x="740" y="2400" width="1080" height="200" fill="#ede7e0" opacity="0.250" />
        </g>
        <g fill="none" stroke="#fdfbf2" strokeWidth="2.200" strokeLinejoin="round">
          {paleRoads.map((p, i) => <path key={i} d={line(p)} />)}
        </g>
        <g fill="#a6dbfa">
          <path d={line([[222, 1945], [260, 1925], [275, 1945], [262, 1972], [240, 1980], [245, 2008], [228, 1988], [206, 1985]]) + "Z"} />
          <path d={line([[385, 2675], [405, 2655], [400, 2710], [385, 2740], [370, 2730], [368, 2700]]) + "Z"} />
          <path d={line([[910, 2300], [930, 2310], [932, 2335], [915, 2342], [920, 2320]]) + "Z"} />
          <path d={line([[1040, 2780], [1065, 2795], [1098, 2808], [1070, 2810], [1040, 2805]]) + "Z"} />
          <path d={line([[1460, 2703], [1480, 2730], [1484, 2750], [1465, 2735]]) + "Z"} />
          <path d={line([[1370, 2928], [1398, 2915], [1388, 2940]]) + "Z"} />
          <path d={line([[515, 2435], [508, 2450], [523, 2480], [515, 2455], [524, 2432]]) + "Z"} />
          <path d={line([[1185, 2378], [1193, 2385], [1188, 2408]]) + "Z"} />
        </g>
        <path d={line([[268, 1945], [300, 1925], [340, 1915], [400, 1892], [430, 1884]])} fill="none" stroke="#dfe7e0" strokeWidth="5" />
        <path d={line([[10, 1718], [28, 1720], [60, 1745], [130, 1780], [260, 1835], [322, 1868], [350, 1890], [380, 1872], [420, 1868]])} fill="none" stroke="#a5a298" strokeWidth="2" />
        <path d={line([[1450, 2200], [1515, 2280], [1600, 2350]])} fill="none" stroke="#a5a298" strokeWidth="2" />
        <g fill="none" stroke="#bdb9ab" strokeWidth="1.800" strokeDasharray="4 3.500">
          {borders.map((p, i) => <path key={i} d={line(p)} />)}
        </g>

        <g stroke="#b9565a" strokeWidth="1.300" strokeLinejoin="round">
          <path d={pinkShape} fill="#fcd4cd" />
          <path d={eastShape} fill="#fcd4cd" />
          <path d={whiteShape} fill="#fffdf5" />
          <path d={southShape} fill="#fffdf5" />
          <path d={redShape} fill="#ff6259" />
          <path d={line(city) + "Z"} fill="#fd9c92" />
          <path d={line(bermo)} fill="none" />
          <path d={line(innerA)} fill="none" />
          <path d={line(innerB)} fill="none" />
        </g>
        <path d={line([[666, 2177], [760, 2345], [825, 2348], [880, 2310], [915, 2268], [1000, 2275], [1222, 2106], [1360, 2132]])} fill="none" stroke="#b9b4ae" strokeWidth="1.800" />

        <g fill="none" strokeWidth="1.500">
          {shields.filter((r) => r.faint).map((r) => (
            <g key={r.n + r.x}>
              <rect x={px(r.x) - r.w / 2} y={py(r.y) - 10} width={r.w} height="20" stroke="#c9c3bd" />
              <text x={px(r.x)} y={py(r.y) + 6} textAnchor="middle" fontSize="17" fontWeight="500" fill="#bdb7b2">{r.n}</text>
            </g>
          ))}
        </g>
        <g fontSize="21.500" textAnchor="middle">
          {faintTowns.map((t) => (
            <g key={t.n}>
              <text x={px(t.x)} y={py(t.y)} fill={t.x > 980 && t.y > 1500 && t.x < 1200 ? "#cdcac5" : "#dba9a8"}>{t.n}</text>
              {t.c && <circle cx={px(t.c[0])} cy={py(t.c[1])} r="3.500" fill="none" stroke="#d8bdb9" strokeWidth="1.500" />}
            </g>
          ))}
          <text x={px(640)} y={py(1817)} fill="#cf3a38">Guidan</text>
          <text x={px(635)} y={py(1859)} fill="#cf3a38">Roumdji</text>
          <text x={px(848)} y={py(1970)} fontSize="26" fill="#b0302f">Maradi</text>
        </g>
        <path d={water} fill="#06147a" />
        <rect x={px(415)} y={py(618)} width="1000" height={(2355 - 618) * SY} fill="none" stroke="#5a6aa8" strokeWidth="1.800" />

        <g textAnchor="middle" fill="#7d7a74">
          {towns.map((t) => (
            <g key={t.n}>
              <text x={px(t.x)} y={py(t.y)} fontSize={t.s ?? 21.5} fontWeight={t.s ? 500 : 400} fill={t.s ? "#5f5c58" : "#7d7a74"} stroke="#fbf7e6" strokeOpacity="0.600" strokeWidth="3" paintOrder="stroke">{t.n}</text>
              {t.c && <circle cx={px(t.c[0])} cy={py(t.c[1])} r={t.s ? 4.5 : 3.5} fill="#fbf7e6" stroke="#7d7a74" strokeWidth="1.600" />}
            </g>
          ))}
          {shields.filter((r) => !r.faint).map((r) => (
            <g key={r.n + r.x}>
              <rect x={px(r.x) - r.w / 2} y={py(r.y) - 10.5} width={r.w} height="21" fill={r.green ? "#5f9b35" : "#fffdf6"} stroke={r.green ? "none" : "#8b8983"} strokeWidth="2" />
              <text x={px(r.x)} y={py(r.y) + 6.5} fontSize="18" fontWeight="500" fill={r.green ? "#e9e85a" : "#6f6d68"}>{r.n}</text>
            </g>
          ))}
        </g>
      </g>
    </svg>
  );
}

function ShowLayers({ className = "" }: { className?: string }) {
  return (
    <div className={`flex h-[72px] w-[302px] items-center rounded-[8px] bg-white shadow-[0_6px_8px_rgba(0,0,0,0.3)] ${className}`}>
      <svg viewBox="0 0 20 12" className="ml-[19px] mt-[2px] h-3 w-5" fill="none" stroke="#444" strokeWidth="1.600">
        <path d="m1 1 9 10 9-10" />
      </svg>
      <span className="ml-[15px] mt-[3px] w-[192px] text-[24px] leading-7 text-[#4f4f4f]">Show layers</span>
      <svg viewBox="0 0 34 30" className="mt-[3px] h-[30px] w-[34px]" fill="none" stroke="#111" strokeWidth="1.300" strokeLinejoin="round">
        <path d="M1 10 17 19.500 33 10 17 1zM1 10v4.500L17 24l16-9.500V10M1 14.500V19l16 9.500L33 19v-4.500" />
      </svg>
    </div>
  );
}

/* ------------------------------------------------------------------ */
/* Map card                                                            */
/* ------------------------------------------------------------------ */

function LayerRow({ label, up = false }: { label: string; up?: boolean }) {
  return (
    <div className="flex justify-between pl-[12px] pr-[17px] text-[28px] leading-8 text-[#4f4f4f]">
      <span className="pt-px">{label}</span>
      <Chevron up={up} className="mt-2" />
    </div>
  );
}

function Sidebar() {
  return (
    <div className="w-[676px] shrink-0 pt-[70px]">
      <h2 className="ml-[52px] text-[48px] font-medium leading-[56px] text-[#a7a7a7]">Map</h2>
      <h3 className="ml-[52px] mt-[45px] text-[36px] leading-[42px] text-black">Layers</h3>
      <div className="mt-[4px] flex h-[34px]">
        <div className="ml-[396px] h-[34px] border-b border-[#8e8e8e] text-[28px] font-medium leading-8 text-[#8e8e8e]">Hide data layers</div>
        <svg viewBox="0 0 14 18" className="ml-[24px] mt-[8px] h-[18px] w-[14px]" fill="none" stroke="#757575" strokeWidth="1.800">
          <path d="M13 1 1.500 9 13 17" />
        </svg>
      </div>
      <div className="ml-[58px] text-[36px] leading-[42px] text-[#757575]">June 3 - Sep 23</div>

      <div className="ml-12 mt-[25px] h-[530px] w-[566px] rounded-[4px] bg-white px-4 pt-[22px] shadow-[0_5px_7px_rgba(0,0,0,0.25)]">
        <div className="h-[54px] w-[534px] border-b border-[#b0b0b0]"><LayerRow label="Rainfall" /></div>
        <div className="h-[230px] w-[534px] border-b border-[#b0b0b0] pt-5">
          <LayerRow label="People" up />
          <p className="ml-[22px] mt-[24px] whitespace-nowrap text-[20px] leading-6 text-[#8a8a8a]">
            Lorem ipsum et sili du. Somet ulrigst men ortoforl
            <br />
            ipsum.
          </p>
          <div className="ml-5 mt-[23px] flex items-center">
            <div className="flex w-[424px] items-center">
              <div className="h-[2px] w-[246px] bg-[#ffa9a3]" />
              <div className="size-[14px] rounded-full bg-[#ff6259]" />
              <div className="h-[2px] w-[104px] bg-[#d2d2d2]" />
            </div>
            <Toggle color="bg-[#ff6259]" />
          </div>
        </div>
        <div className="h-[74px] w-[534px] border-b border-[#b0b0b0] pt-5"><LayerRow label="Infrastructure" /></div>
        <div className="w-[534px] pt-5"><LayerRow label="Crops" /></div>
      </div>

      <div className="ml-[58px] mt-[77px] text-[36px] leading-[42px] text-[#757575]">That One Big Flood</div>
      <div className="ml-[50px] mt-[15px] h-[260px] w-[564px] rounded-[8px] bg-[#fcfcfc] px-[14px] pt-[24px] shadow-[0_5px_7px_rgba(0,0,0,0.25)]">
        <div className="flex items-start">
          <svg viewBox="0 0 24 24" className="ml-[6px] mt-[3px] size-6">
            <circle cx="12" cy="12" r="12" fill="#959595" />
            <path d="M12 5v14M5 12h14" stroke="#fff" strokeWidth="2" />
          </svg>
          <span className="ml-[21px] text-[28px] leading-8 text-[#959595]">HISTORIC EVENT</span>
        </div>
        <div className="mt-[58px] h-[56px] border-b border-[#c4c4c4]"><LayerRow label="Rainfall" /></div>
        <div className="pt-[20px]"><LayerRow label="People" /></div>
      </div>

      <div className="ml-[58px] mt-[87px] text-[36px] leading-[42px] text-[#757575]">Detail of raster layers</div>
      <div className="ml-[50px] mt-[21px] h-[236px] w-[456px] rounded-[8px] bg-white pt-[19px] shadow-[0_5px_7px_rgba(0,0,0,0.25)]">
        <div className="pr-[5px] text-center text-[28px] leading-8 text-black underline decoration-[1.5px] underline-offset-[3px]">Level of detail</div>
        <div className="mt-[21px] flex h-[70px] text-center text-[28px] leading-8 text-black">
          <div className="w-[230px] bg-[#efefef] pr-[7px] pt-[19px]">District</div>
          <div className="w-[226px] pr-1 pt-[19px]">Pixel</div>
        </div>
        <div className="mt-[7px] pl-3 text-center text-[20px] leading-6 text-[#a0a0a0]">population exposed</div>
        <div className="ml-[62px] mt-[14px] flex h-[13px] w-[355px] border border-[#9a9a9a]">
          <div className="w-[84px] border-r-2 border-[#9a9a9a] bg-white" />
          <div className="w-[84px] border-r-2 border-[#9a9a9a] bg-[#fffaf0]" />
          <div className="w-[98px] border-r-2 border-[#9a9a9a] bg-[#fcd3cc]" />
          <div className="flex-1 bg-[#ff6259]" />
        </div>
        <div className="ml-[62px] mt-[3px] flex text-center text-[20px] leading-6 text-[#a0a0a0]">
          <span className="w-[84px] pl-px">0</span>
          <span className="w-[84px] pl-px">1</span>
          <span className="w-[100px] pl-[7px]">2</span>
          <span className="w-[84px] pl-px">3</span>
        </div>
      </div>
    </div>
  );
}

function MapCard() {
  return (
    <section className="ml-20 mt-[86px] flex h-[1706px] w-[2700px] rounded-[30px] bg-white shadow-[0_6px_8px_rgba(0,0,0,0.25)]">
      <Sidebar />
      <div className="relative mt-[212px] h-[1494px] w-[1018px] shrink-0">
        <div className="absolute -left-1 bottom-0 h-[49px] w-1 bg-[#efe9df]" />
        <div className="absolute inset-0 overflow-hidden">
          <FloodMap id="left" viewBox="756 1084 1018 1494" shields={roads} />
        </div>
        <div className="absolute left-[46px] top-[39px] text-[36px] font-bold leading-[42px] text-[#4f4f4f]">June 3 - Sep 23</div>
        <div className="absolute bottom-[74px] left-[72px] flex items-start">
          <ShowLayers className="mt-[2px]" />
          <div className="ml-9 flex h-[70px] w-[272px] items-center rounded-[8px] bg-white text-[28px] leading-8 shadow-[0_6px_8px_rgba(0,0,0,0.3)]">
            <svg viewBox="0 0 18 18" className="-mt-1 ml-8 h-[18px] w-[18px]" stroke="#000" strokeWidth="2.400">
              <path d="M9 0v18M0 9h18" />
            </svg>
            <span className="ml-6 mt-[3px] whitespace-nowrap">ADD MARKER</span>
          </div>
        </div>
      </div>
      <div className="mt-[212px] flex h-[1494px] w-8 shrink-0 justify-between bg-[#e0e0e0] px-[6px] pt-[750px]">
        <div className="h-[67px] w-[1.5px] bg-[#333]" />
        <div className="h-[67px] w-[1.5px] bg-[#333]" />
        <div className="h-[67px] w-[1.5px] bg-[#333]" />
      </div>
      <div className="relative mt-[216px] h-[1490px] w-[978px] shrink-0">
        <div className="absolute inset-0 overflow-hidden">
          <FloodMap id="right" viewBox="1806 1088 978 1490" transform="translate(1013 9.900) scale(0.9965 0.9954)" shields={roads.slice(1)} />
        </div>
        <div className="absolute left-[58px] top-[29px] text-[36px] font-bold leading-[42px] text-[#4f4f4f]">That One Big Flood</div>
        <div className="absolute right-0 top-[17px] flex h-[69px] w-[490px] items-center rounded-full bg-white/95">
          <svg viewBox="0 0 30 28" className="ml-[43px] h-7 w-[30px]" fill="none" stroke="#555" strokeWidth="1.700">
            <circle cx="12" cy="12" r="10.500" />
            <path d="m20 19.500 9 7.500" />
          </svg>
          <span className="ml-[41px] text-[28px] font-normal leading-8 text-[#757575]">Search for a location...</span>
        </div>
        <ShowLayers className="absolute bottom-[74px] left-9" />
        <div className="absolute left-[797px] top-[1258px] flex h-[136px] w-16 flex-col items-center rounded-[18px] bg-white">
          <svg viewBox="0 0 20 20" className="mt-[24px] size-5" stroke="#757575" strokeWidth="1.800">
            <path d="M10 0v20M0 10h20" />
          </svg>
          <div className="mt-[27px] h-[2px] w-[54px] bg-[#d2d2d2]" />
          <div className="mt-[30px] h-[2px] w-5 bg-[#8a8a8a]" />
        </div>
      </div>
    </section>
  );
}

/* ------------------------------------------------------------------ */
/* Rainfall card                                                       */
/* ------------------------------------------------------------------ */

const series: { color: string; v: number[] }[] = [
  { color: "#a6cee3", v: [5.5, 21, 25, 23.5, 39, 30, 49, 62, 50.5, 43, 106, 33, 86, 63.5, 41, 28, 15.5, 9.5] },
  { color: "#1f78b4", v: [22, 20, 10.5, 23, 23, 20.7, 50.5, 53, 14.5, 59.5, 105.5, 95, 86, 84, 20, 19, 6, 1.5] },
  { color: "#b2df8a", v: [17, 17.6, 9.5, 19.5, 32, 36, 29, 46.5, 31, 53.5, 107, 51, 80.5, 48.5, 23, 62, 13.7, 1] },
  { color: "#33a02c", v: [4.5, 10, 8, 18.5, 23, 10.5, 25, 56, 54, 17, 78, 20, 18, 32, 43, 28, 7.5, 1.5] },
];
const X0 = 1114;
const STEP = 90.1;
const Y0 = 3229;
const UNIT = 68.75 / 20;

/* Cubic segments that level out at every inner sample */
function smooth(v: number[]) {
  const pts = v.map((n, i): Pt => [X0 + i * STEP, Y0 - n * UNIT]);
  const last = pts.length - 1;
  let d = `M${pts[0][0]} ${pts[0][1]}`;
  for (let i = 1; i <= last; i++) {
    const h = STEP * 0.37;
    const rise = (pts[i][1] - pts[i - 1][1]) * 0.5;
    const a = i === 1 ? rise : 0;
    const b = i === last ? rise : 0;
    d += `C${pts[i - 1][0] + h} ${pts[i - 1][1] + a} ${pts[i][0] - h} ${pts[i][1] - b} ${pts[i][0]} ${pts[i][1]}`;
  }
  return d;
}

const dates = ["May 27, 2019", "Jun 10, 2019", "Jun 24, 2019", "Jul 8, 2019", "Jul 22, 2019", "Aug 5, 2019", "Aug 19, 2019", "Sep 2, 2019", "Sep 16, 2019"];

function Reading({ value, className }: { value: string; className: string }) {
  return (
    <div className={`whitespace-nowrap pl-[15px] text-[48px] leading-[56px] text-black ${className}`}>
      {value}
      <span className="text-[28px]">mm</span>
    </div>
  );
}

function RainfallCard() {
  return (
    <section className="ml-[76px] mt-[77px] h-[721px] w-[2704px] rounded-[30px] bg-white pt-[32px] shadow-[0_6px_8px_rgba(0,0,0,0.25)]">
      <div className="ml-[43px] flex h-[60px] w-[2529px] justify-between">
        <h2 className="text-[48px] font-medium leading-[56px] text-[#a7a7a7]">Rainfall levels for Maradi</h2>
        <div className="mt-[18px] text-[36px] leading-[42px] text-[#4f4f4f]">June 1 - Sep 30</div>
      </div>
      <div className="ml-[31px] mt-[10px] h-1 w-[2641px] bg-[#f0f0f0]" />
      <div className="ml-[60px] flex">
        <div className="mt-[50px] w-[724px] text-[28px] leading-8">
          <div className="grid grid-cols-[266px_240px_218px] font-light text-[#8e8e8e]">
            <span className="pl-[24px]">Measurements</span>
            <span>Latest reading</span>
            <span className="whitespace-nowrap">Display on chart</span>
          </div>
          <div className="grid h-[133px] grid-cols-[264px_240px_220px] border-b border-[#dedede]">
            <div className="mt-9 pl-6 text-[#3c3c3c]">Rainfall for<br />selected dates</div>
            <Reading value="9.67" className="mt-[45px]" />
            <Toggle color="bg-[#a6cee3]" className="ml-12 mt-[49px]" />
          </div>
          <div className="grid h-[140px] grid-cols-[264px_240px_220px] border-b border-[#dedede]">
            <div className="mt-[38px] whitespace-nowrap pl-6 text-black">Seasonal<br />precipitation avg</div>
            <Reading value="1.32" className="mt-[44px]" />
            <Toggle color="bg-[#33a02c]" className="ml-12 mt-[58px]" />
          </div>
          <div className="grid h-[140px] grid-cols-[264px_240px_220px] border-b border-[#dedede]">
            <div className="pl-[30px] pt-[29px]">
              <div className="flex h-[42px] w-[178px] justify-between border-b-2 border-[#4f4f4f] pl-[2px] pr-[7px] text-[#4f4f4f]">
                <span className="font-medium">Maradi</span>
                <Caret className="mt-[8px]" />
              </div>
              <div className="ml-[2px] mt-[21px] text-[24px] font-light leading-7 text-[#8e8e8e]">Select a region</div>
            </div>
            <Reading value="1.07" className="mt-[46px]" />
            <Toggle color="bg-[#1f78b4]" className="ml-12 mt-[56px]" />
          </div>
        </div>
        <div className="ml-20 mt-[43px] h-[462px] w-1 bg-[#ededed]" />
        <svg viewBox="1040 2800 1660 475" className="ml-24 mt-[39px] h-[475px] w-[1660px]" fontSize="20" fill="#a7a7a7">
          {[0, 20, 40, 60, 80, 100, 120].map((n) => (
            <g key={n}>
              <path d={`M${X0} ${Y0 - n * UNIT}H2645.500`} stroke="#efefef" strokeWidth="2" />
              <text x="1094.500" y={Y0 - n * UNIT + 11.5} textAnchor="end">{n}</text>
            </g>
          ))}
          {dates.map((t, i) => (
            <text key={t} x={X0 + i * STEP * 2} y="3260.500" textAnchor="middle">{t}</text>
          ))}
          {series.map((s) => (
            <path key={s.color} d={smooth(s.v)} fill="none" stroke={s.color} strokeWidth="4" />
          ))}
        </svg>
      </div>
      <Actions className="ml-[2252px] mt-[35px] gap-5" />
    </section>
  );
}

/* ------------------------------------------------------------------ */
/* Footer                                                              */
/* ------------------------------------------------------------------ */

function Footer() {
  return (
    <footer className="mt-[232px] flex h-[222px] items-start bg-[#efeded] text-[24px] leading-7 text-[#757575]">
      <svg viewBox="0 0 330 330" className="ml-[140px] mt-[52px] size-[110px]">
        <circle cx="163" cy="175" r="130" fill="#6f6f6f" />
        <g fill="none" stroke="#efeded" strokeWidth="9">
          <path d="M92 68 113 84M138 84 178 54M142 104 172 126M40 122 154 162M120 112C90 160 74 210 96 278M30 212C60 204 100 206 132 216" />
          <circle cx="126" cy="96" r="15" />
          <path d="M272 108 246 124 248 144 268 160 300 160" />
          <path d="M300 188 262 180 238 156 196 170 180 184 186 222 214 242 214 310" />
        </g>
        <path d="M218 35h18L112 318H92z" fill="#6f6f6f" stroke="#efeded" strokeWidth="8" />
        <path d="M219 36h15L108 318H94z" fill="#6f6f6f" />
      </svg>
      <div className="mt-[83px] w-[458px] whitespace-nowrap font-['Open_Sans',sans-serif] text-[54px] font-normal leading-[62px] tracking-[-1px] text-[#666]">Cloud to Street</div>
      <div className="mt-[88px] w-[686px]">The Global High Resolution Flood Mapping<br />and Monitoring System</div>
      <div className="mt-[42px] h-36 w-px bg-[#a0a0a0]" />
      <div className="ml-[103px] mt-[68px] w-[590px]">The flood maps shown are derived<br />from NASA's Landsat 7 and 8, and<br />ESA's Sentinel 1 and Sentinel 2</div>
      <ul className="mt-[68px] flex flex-col gap-[32px]">
        <li className="flex items-center">
          <span className="mr-[19px] size-[7px] rounded-full bg-[#757575]" />
          <span><a className="underline decoration-[1.5px] underline-offset-[3px]">Click here</a> to view other Cloud to Street projecrts</span>
        </li>
        <li className="flex items-center">
          <span className="mr-[19px] size-[7px] rounded-full bg-[#757575]" />
          <span>Need help? <a className="underline decoration-[1.5px] underline-offset-[3px]">Contact us</a>.</span>
        </li>
      </ul>
    </footer>
  );
}

export default function App() {
  return (
    <div className="w-[2880px] bg-[#f9fafc] font-[Roboto,sans-serif]">
      <Header />
      <div className="ml-[102px] mt-[108px] flex">
        <PointsCard />
        <PeopleCard />
        <RiverCard />
      </div>
      <MapCard />
      <RainfallCard />
      <Footer />
    </div>
  );
}
